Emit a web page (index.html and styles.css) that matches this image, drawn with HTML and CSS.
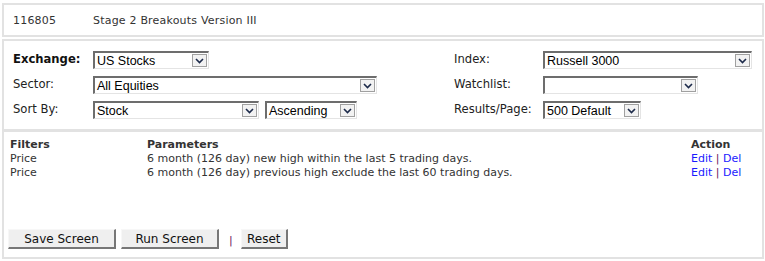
FILE: index.html
```html
<!DOCTYPE html>
<html lang="en">

<head>
    <meta charset="UTF-8">
    <title>Stage 2 Breakouts Version III</title>
    <link rel="stylesheet" href="styles.css">
</head>

<body>
    <div class="panel title-bar">
        <span class="screen-id">116805</span>
        <span class="screen-name">Stage 2 Breakouts Version III</span>
    </div>

    <div class="panel options">
        <div class="opt-col left">
            <label class="strong">Exchange:</label>
            <div class="select w-exchange"><span class="value">US Stocks</span><span class="arrow"><svg width="9" height="6" viewBox="0 0 9 6"><path d="M1 1 L4.5 4.5 L8 1" fill="none" stroke="#1c2a4a" stroke-width="1.6"/></svg></span></div>

            <label>Sector:</label>
            <div class="select w-sector"><span class="value">All Equities</span><span class="arrow"><svg width="9" height="6" viewBox="0 0 9 6"><path d="M1 1 L4.5 4.5 L8 1" fill="none" stroke="#1c2a4a" stroke-width="1.6"/></svg></span></div>

            <label>Sort By:</label>
            <div class="pair">
                <div class="select w-sort"><span class="value">Stock</span><span class="arrow"><svg width="9" height="6" viewBox="0 0 9 6"><path d="M1 1 L4.5 4.5 L8 1" fill="none" stroke="#1c2a4a" stroke-width="1.6"/></svg></span></div>
                <div class="select w-order"><span class="value">Ascending</span><span class="arrow"><svg width="9" height="6" viewBox="0 0 9 6"><path d="M1 1 L4.5 4.5 L8 1" fill="none" stroke="#1c2a4a" stroke-width="1.6"/></svg></span></div>
            </div>
        </div>

        <div class="opt-col right">
            <label>Index:</label>
            <div class="select w-index"><span class="value">Russell 3000</span><span class="arrow"><svg width="9" height="6" viewBox="0 0 9 6"><path d="M1 1 L4.5 4.5 L8 1" fill="none" stroke="#1c2a4a" stroke-width="1.6"/></svg></span></div>

            <label>Watchlist:</label>
            <div class="select w-watch"><span class="value"></span><span class="arrow"><svg width="9" height="6" viewBox="0 0 9 6"><path d="M1 1 L4.5 4.5 L8 1" fill="none" stroke="#1c2a4a" stroke-width="1.6"/></svg></span></div>

            <label>Results/Page:</label>
            <div class="select w-results"><span class="value">500 Default</span><span class="arrow"><svg width="9" height="6" viewBox="0 0 9 6"><path d="M1 1 L4.5 4.5 L8 1" fill="none" stroke="#1c2a4a" stroke-width="1.6"/></svg></span></div>
        </div>
    </div>

    <div class="panel filters">
        <table class="filter-table">
            <tr>
                <th class="c-filter">Filters</th>
                <th class="c-param">Parameters</th>
                <th class="c-action">Action</th>
            </tr>
            <tr>
                <td>Price</td>
                <td>6 month (126 day) new high within the last 5 trading days.</td>
                <td><a href="#">Edit</a> <span class="sep">|</span> <a href="#">Del</a></td>
            </tr>
            <tr>
                <td>Price</td>
                <td>6 month (126 day) previous high exclude the last 60 trading days.</td>
                <td><a href="#">Edit</a> <span class="sep">|</span> <a href="#">Del</a></td>
            </tr>
        </table>

        <div class="buttons">
            <button class="btn w-save">Save Screen</button>
            <button class="btn w-run">Run Screen</button>
            <span class="sep">|</span>
            <button class="btn w-reset">Reset</button>
        </div>
    </div>
</body>

</html>
```

FILE: styles.css
```css
/* Global styles */
body {
    margin: 0;
    padding: 3px 1px 2px 2px;
    font-family: "DejaVu Sans", Verdana, sans-serif;
    font-size: 11px;
    color: #333;
    background: #fff;
}

.panel {
    border: 2px solid #e2e2e2;
}

/* Title bar */
.title-bar {
    height: 30px;
    display: flex;
    align-items: center;
    padding-left: 9px;
    letter-spacing: 0.2px;
}

.screen-id {
    width: 80px;
}

/* Options */
.options {
    margin-top: 2px;
    height: 92px;
    display: flex;
    padding: 10px 0 0 9px;
    box-sizing: border-box;
    color: #222;
}

.opt-col {
    display: grid;
    grid-template-rows: 18px 18px 18px;
    row-gap: 7px;
    align-items: center;
    font-size: 11.6px;
}

.opt-col.left {
    width: 441px;
    grid-template-columns: 80px auto;
}

.opt-col.right {
    grid-template-columns: 89px auto;
}

.opt-col label {
    align-self: start;
    padding-top: 1px;
}

.opt-col .strong {
    font-weight: bold;
    color: #111;
}

.pair {
    display: flex;
    gap: 6px;
}

/* Classic select boxes */
.select {
    height: 18px;
    box-sizing: border-box;
    display: flex;
    align-items: center;
    background: #fff;
    border-top: 2px solid #6d6d6d;
    border-left: 2px solid #6d6d6d;
    border-right: 1px solid #e4e4e4;
    border-bottom: 1px solid #e4e4e4;
    font-family: "Liberation Sans", Arial, sans-serif;
    font-size: 12.5px;
    color: #000;
}

.select .value {
    flex: 1;
    padding-left: 2px;
    white-space: nowrap;
}

.select .arrow {
    width: 15px;
    height: 13px;
    margin-right: 1px;
    box-sizing: border-box;
    border: 1px solid #a0a0a0;
    background: #f2f2f2;
    display: flex;
    align-items: center;
    justify-content: center;
}

.w-exchange { width: 116px; }
.w-sector { width: 284px; }
.w-sort { width: 166px; }
.w-order { width: 92px; }
.w-index { width: 209px; }
.w-watch { width: 155px; }
.w-results { width: 98px; }

/* Filters */
.filters {
    margin-top: -1px;
    height: 129px;
    box-sizing: border-box;
    padding: 5px 0 0 6px;
    display: flex;
    flex-direction: column;
}

.filter-table {
    border-collapse: collapse;
    width: 100%;
}

.filter-table th,
.filter-table td {
    padding: 0;
    height: 14px;
    text-align: left;
    font-size: 11px;
    white-space: nowrap;
}

.filter-table th {
    font-weight: bold;
}

.c-filter { width: 137px; }
.c-action { width: 71px; }

.filter-table a {
    color: #1a1aff;
    text-decoration: none;
}

.sep {
    color: #6b2060;
}

.buttons {
    margin-top: auto;
    margin-bottom: 8px;
    margin-left: -2px;
    display: flex;
    align-items: center;
    gap: 5px;
}

.buttons .sep {
    margin: 2px 3px 0 5px;
    font-size: 11px;
}

.btn {
    height: 20px;
    box-sizing: border-box;
    background: #efefef;
    border: 1px solid #f7f7f7;
    border-right: 2px solid #777;
    border-bottom: 2px solid #777;
    font-family: "DejaVu Sans", Verdana, sans-serif;
    font-size: 12px;
    color: #111;
    padding: 0;
}

.w-save { width: 108px; }
.w-run { width: 98px; }
.w-reset { width: 47px; }
```
